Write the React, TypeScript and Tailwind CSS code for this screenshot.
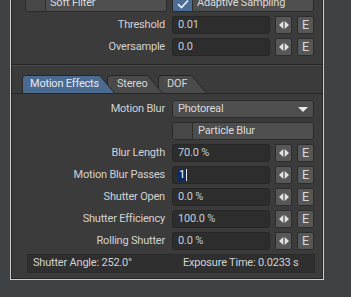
import React from "react";

const ArrowIcon = () => (
  <svg width="10" height="8" viewBox="0 0 10 8">
    <polygon points="4.3,0 4.3,8 0,4" fill="#e4e4e4" />
    <polygon points="5.7,0 5.7,8 10,4" fill="#e4e4e4" />
  </svg>
);

const ArrowBtn = () => (
  <div className="ml-[5px] w-[17px] h-[18px] rounded-[2px] bg-[#575757] border border-[#2c2c2c] flex items-center justify-center">
    <ArrowIcon />
  </div>
);

const EBtn = () => (
  <div className="ml-[5px] w-[17px] h-[18px] rounded-[2px] bg-[#575757] border border-[#2c2c2c] flex items-center justify-center text-[12.5px] text-[#d8d8d8] leading-none">
    E
  </div>
);

const Label = ({ children }: { children: React.ReactNode }) => (
  <div className="w-[153px] text-right text-[#d2d2d2] pr-0 shrink-0">{children}</div>
);

const NumRow = ({ label, value, selected }: { label: string; value: string; selected?: boolean }) => (
  <div className="flex items-center h-[18px]">
    <Label>{label}</Label>
    <div className="ml-[7px] w-[98px] h-[18px] rounded-[3px] bg-[#2d2d2d] border border-[#262626] pl-[5px] flex items-center text-[#c4cfdb]">
      {selected ? (
        <>
          <span className="bg-[#0b2a63] text-white px-[1px] leading-[12px]">{value}</span>
          <span className="w-px h-[12px] bg-[#e8e8e8]" />
        </>
      ) : (
        value
      )}
    </div>
    <ArrowBtn />
    <EBtn />
  </div>
);

const Tab = ({
  label,
  width,
  active,
  pl,
  className,
}: {
  label: string;
  width: number;
  active?: boolean;
  pl: string;
  className: string;
}) => {
  const d = `M0.5,18 V3 Q0.5,0.5 3,0.5 H${width - 15.5} L${width - 0.5},18`;
  return (
    <div className={`relative h-[18px] ${className}`} style={{ width }}>
      <svg className="absolute inset-0" width={width} height={18} viewBox={`0 0 ${width} 18`}>
        <path d={d + " Z"} fill={active ? "#4b6a8f" : "#4a4a4a"} />
        <path d={d} fill="none" stroke="#262626" strokeWidth="1" />
      </svg>
      <div className={`relative h-full flex items-center ${pl} ${active ? "text-[#e4e9ef]" : "text-[#d6d6d6]"}`}>
        {label}
      </div>
    </div>
  );
};

export default function App() {
  return (
    <div className="w-[351px] h-[297px] bg-[#3e4245] overflow-hidden font-['Roboto',sans-serif] text-[11px] tracking-[-0.2px]">
      <div className="-mt-[10px] ml-[10px] w-[314px] border border-[#cfcfcf]">
        <div className="border border-[#262626] bg-[#3b3b3b] pt-[3px] pb-[5px]">
          {/* top buttons */}
          <div className="flex pl-[13px]">
            <div className="w-[142px] h-[17px] rounded-[3px] bg-[#4e4e4e] border border-[#2a2a2a] flex overflow-hidden">
              <div className="w-[20px] h-full bg-[#474747] border-r border-[#2e2e2e]" />
              <div className="pl-[4px] flex items-center text-[#dadada]">Soft Filter</div>
            </div>
            <div className="ml-[5px] w-[142px] h-[17px] rounded-[3px] bg-[#4e4e4e] border border-[#2a2a2a] flex overflow-hidden">
              <div className="w-[20px] h-full bg-[#4b6c95] border-r border-[#2e2e2e] flex items-center justify-center">
                <svg width="12" height="10" viewBox="0 0 12 10">
                  <polyline points="1,5 4.5,8.5 11,1.5" fill="none" stroke="#eef2f6" strokeWidth="1.6" />
                </svg>
              </div>
              <div className="pl-[4px] flex items-center text-[#dadada]">Adaptive Sampling</div>
            </div>
          </div>

          <div className="mt-[4px] flex flex-col gap-[4px]">
            <NumRow label="Threshold" value="0.01" />
            <NumRow label="Oversample" value="0.0" />
          </div>

          {/* separator */}
          <div className="mt-[8px] h-px bg-[#262626]" />
          <div className="h-px bg-[#4a4a4a]" />

          {/* tabs */}
          <div className="mt-[9px] flex pl-[10px]">
            <Tab label="Motion Effects" width={93} active pl="pl-[8px]" className="z-30" />
            <Tab label="Stereo" width={56} pl="pl-[10px]" className="-ml-[8px] z-20" />
            <Tab label="DOF" width={49} pl="pl-[9px]" className="-ml-[5px] z-10" />
          </div>
          <div className="h-px bg-[#262626]" />

          <div className="mt-[6px] flex flex-col gap-[4px]">
            <div className="flex items-center h-[18px]">
              <Label>Motion Blur</Label>
              <div className="ml-[7px] w-[142px] h-[18px] rounded-[3px] bg-[#4e4e4e] border border-[#2a2a2a] flex items-center justify-between pl-[5px] pr-[5px] text-[#dadada]">
                <span>Photoreal</span>
                <svg width="10" height="5" viewBox="0 0 10 5">
                  <polygon points="0,0 10,0 5,5" fill="#e8e8e8" />
                </svg>
              </div>
            </div>
            <div className="flex items-center h-[18px]">
              <div className="w-[153px] shrink-0" />
              <div className="ml-[7px] w-[142px] h-[18px] rounded-[3px] bg-[#4e4e4e] border border-[#2a2a2a] flex overflow-hidden">
                <div className="w-[20px] h-full bg-[#474747] border-r border-[#2e2e2e]" />
                <div className="pl-[5px] flex items-center text-[#dadada]">Particle Blur</div>
              </div>
            </div>
            <NumRow label="Blur Length" value="70.0 %" />
            <NumRow label="Motion Blur Passes" value="1" selected />
            <NumRow label="Shutter Open" value="0.0 %" />
            <NumRow label="Shutter Efficiency" value="100.0 %" />
            <NumRow label="Rolling Shutter" value="0.0 %" />
          </div>

          <div className="mt-[4px] ml-[15px] w-[288px] h-[19px] bg-[#2f2f2f] border border-[#2a2a2a] flex items-center pl-[5px] text-[#d2d2d2]">
            <span className="w-[150px]">Shutter Angle: 252.0°</span>
            <span>Exposure Time: 0.0233 s</span>
          </div>
        </div>
      </div>
    </div>
  );
}
